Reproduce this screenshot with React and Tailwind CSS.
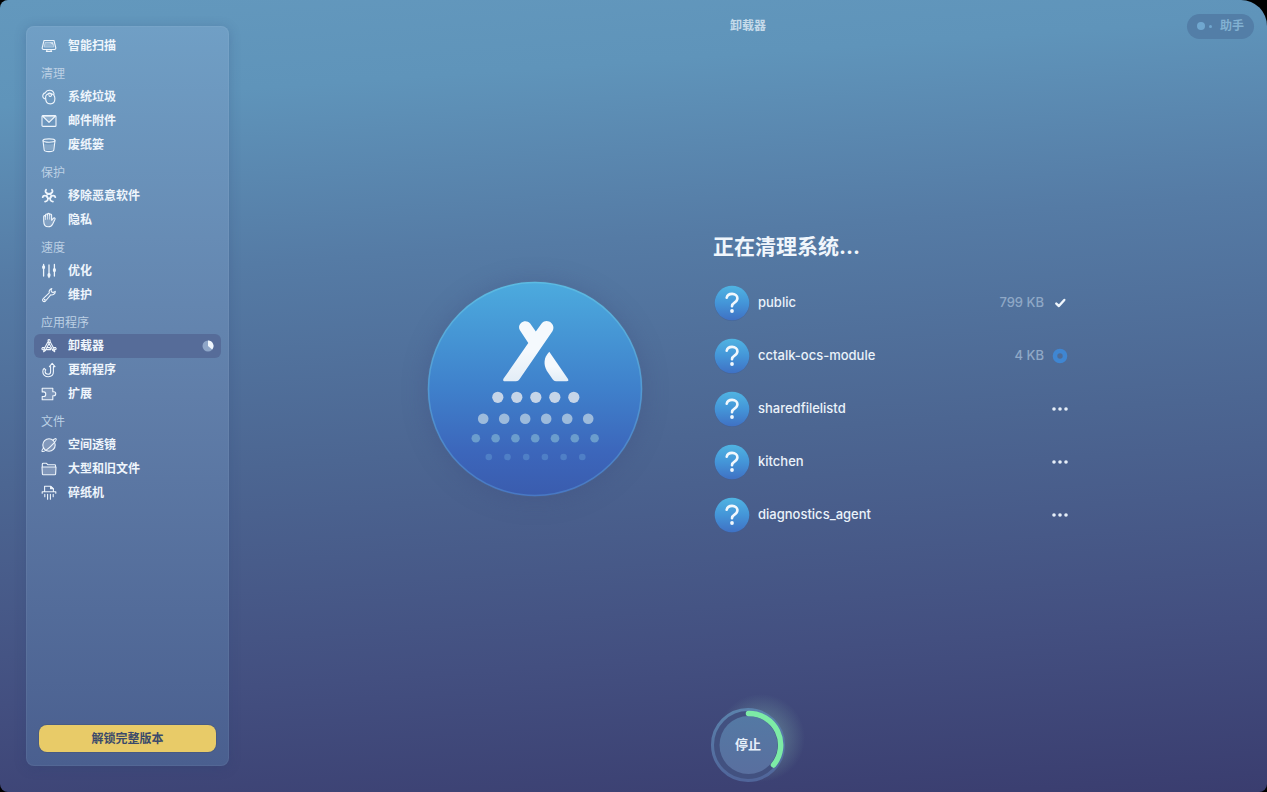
import React, { useState } from 'react';

const line = {
  fill: 'none',
  stroke: 'currentColor',
  strokeWidth: 1.1,
  strokeLinecap: 'round',
  strokeLinejoin: 'round',
};

const Icon = ({ children }) => (
  <svg viewBox="0 0 16 16" className="h-4 w-4 shrink-0" aria-hidden="true" {...line}>
    {children}
  </svg>
);

const icons = {
  scan: (
    <Icon>
      <path d="M3 2.5h10l1.8 7.3a1.4 1.4 0 0 1-1.3 1.7H2.5a1.4 1.4 0 0 1-1.3-1.7z" />
      <path d="M3.2 8.6 4.2 4.4h7.6l1 4.2z" fill="currentColor" fillOpacity="0.3" strokeWidth="0.5" />
      <path d="M8.5 4.4h3.3l.6 2.6z" fill="currentColor" fillOpacity="0.7" stroke="none" />
      <path d="M6.2 11.6 5.4 13.4h5.2l-.8-1.8" />
    </Icon>
  ),
  junk: (
    <Icon>
      <path d="M4.6 8.400c0-2.600 1.600-3.700 4.400-3.700 3 0 4.900 1.800 4.900 4.900 0 3.400-1.400 5.300-4.600 5.300-3.300 0-4.700-2.200-4.700-6.500z" />
      <path d="M4.600 10C2.200 9.800 1.200 7.800 2 5.800c.5-1.300 1.500-1.900 2.300-1.900C5 2.100 6.600 1.200 8.600 1.200c2.300 0 4.100 1.400 4.500 4" />
      <path d="M7 5.200c.2-1.600 3.600-1.500 3.600.7 0 1.700-2.200 2-2.600.7" />
    </Icon>
  ),
  mail: (
    <Icon>
      <rect x="1" y="2.600" width="14" height="10.800" rx="1" />
      <path d="M1.500 3 8 9.400 14.500 3z" fill="currentColor" fillOpacity="0.25" />
    </Icon>
  ),
  trash: (
    <Icon>
      <path d="M2 3.800 3.200 13c.1 1 2.300 1.600 4.800 1.600s4.700-.6 4.800-1.600L14 3.800" />
      <ellipse cx="8" cy="3.600" rx="6" ry="1.700" />
      <path d="M3 6.800c2.500 1 7.500 1 10 0l-.7 5.600c-2.200.9-6.400.9-8.600 0z" fill="currentColor" fillOpacity="0.2" stroke="none" />
    </Icon>
  ),
  malware: (
    <Icon>
      <circle cx="8" cy="8.200" r="2.300" strokeWidth="1.200" />
      <path
        d="M5 1.800C3.800 3.200 4.500 5.600 8 6c3.500-.4 4.200-2.800 3-4.200M1.700 9.200c.4-1.800 3.600-2.200 5 .2.800 1.900-.2 4-2.600 4.300M14.300 9.200c-.4-1.800-3.600-2.200-5 .2-.8 1.900.2 4 2.600 4.300"
        strokeWidth="1.800"
      />
    </Icon>
  ),
  privacy: (
    <Icon>
      <path
        d="M2.700 9V4.600c0-1.300 1.800-1.300 1.800 0V3c0-1.400 2-1.400 2 0v-.6c0-1.400 2.100-1.400 2.100 0V3c0-1.300 2-1.300 2 0v5.300l1.700-2c.9-.9 2.200-.1 1.700 1l-2.300 4.600c-1 2-2.500 2.900-4.500 2.900-3 0-4.500-2-4.500-5.800z"
        fill="currentColor"
        fillOpacity="0.2"
      />
      <path d="M4.500 4.500v3M6.500 3v4.200M8.600 3v4.200" strokeWidth="0.700" />
    </Icon>
  ),
  speed: (
    <Icon>
      <path d="M2.600 1.500v11.500M8 2v12.500M13.400 1.500v11.500" strokeWidth="1.300" />
      <path d="M2.600 3.800v.8M8 11.600v.8M13.400 6.600v.8" strokeWidth="3" />
    </Icon>
  ),
  wrench: (
    <Icon>
      <path d="M10.800 1.600c-2 .5-3.200 2.400-2.500 4.300L2.200 11.600c-1.800 1.900.5 4.200 2.300 2.400l5.200-6.200c2.200.6 4.500-.8 4.600-3.400l-2.300 1.200-1.600-.9-.3-1.700z" />
      <circle cx="3.700" cy="12.600" r="0.400" />
    </Icon>
  ),
  uninstall: (
    <Icon>
      <path d="M7 2.200c.6-.8 1.400-.8 2 0l.3 1.900 4 7.300-1.500.9-4-7.200zM8.700 4.200l-4.300 8.100-1.600-.9 4.200-7.600" />
      <path d="M1.600 9.600h2M12.400 9.600h2M1.500 9.600c-1 .7-.7 2.100.4 2.100h.8M14.500 9.600c1 .7.7 2.100-.4 2.100M3 11.800l-.4 2 1.800-1.300M13.200 11.600l.5 2.100-1.900-1.300M6.300 9.600h2.500l1 2H5.300" />
    </Icon>
  ),
  update: (
    <Icon>
      <path d="M8.400 4.600 11.200 1.300 14 4.600h-1.600v5.200c0 3-2 4.900-5 4.900-3.300 0-5.600-2-5.600-5 0-1.400.4-2.500 1.300-3.300l1.700 1.500c-.5.500-.7 1-.7 1.700 0 1.700 1.300 2.700 3 2.700 1.600 0 2.500-1 2.500-2.600V4.600z" />
    </Icon>
  ),
  extension: (
    <Icon>
      <path
        d="M1.200 2.200h10.600v3.600h1c2.600 0 2.600 4 0 4h-1v4H1.200v-3.300h1.600c2.600 0 2.600-4.600 0-4.600H1.200z"
        fill="currentColor"
        fillOpacity="0.200"
      />
    </Icon>
  ),
  lens: (
    <Icon>
      <circle cx="8" cy="8" r="6.200" fill="currentColor" fillOpacity="0.250" />
      <path d="M12 3c1.700-1.300 2.800-1.700 3.100-1.200.7 1-2 4.400-5.700 7.800C5.800 12.900 2 15.200 1.100 14.300c-.5-.5.100-1.700 1.500-3.400" />
    </Icon>
  ),
  folder: (
    <Icon>
      <path d="M1.300 5.600V3.200c0-.6.300-.9.900-.9h3.300l1.300 1.400h6.800c.6 0 .9.300.9.900v1" />
      <path d="M1 6h14l-.4 6.900c0 .5-.4.900-.9.900H2.300c-.5 0-.9-.4-.9-.9z" fill="currentColor" fillOpacity="0.250" />
    </Icon>
  ),
  shredder: (
    <Icon>
      <path d="M3.600 6.400V1.300h6.200l2.600 2.300v2.800" />
      <path d="M9.600 1.500v2.300h2.500z" fill="currentColor" />
      <path d="M1.200 8.200V6.700h13.600v1.500" />
      <path d="M3.800 9.300v2.500M6.600 9.300v5M9.400 9.300v5M12.200 9.300v2.500" />
    </Icon>
  ),
};

const sections = [
  { title: '', items: [{ id: 'scan', label: '智能扫描' }] },
  {
    title: '清理',
    items: [
      { id: 'junk', label: '系统垃圾' },
      { id: 'mail', label: '邮件附件' },
      { id: 'trash', label: '废纸篓' },
    ],
  },
  {
    title: '保护',
    items: [
      { id: 'malware', label: '移除恶意软件' },
      { id: 'privacy', label: '隐私' },
    ],
  },
  {
    title: '速度',
    items: [
      { id: 'speed', label: '优化' },
      { id: 'wrench', label: '维护' },
    ],
  },
  {
    title: '应用程序',
    items: [
      { id: 'uninstall', label: '卸载器' },
      { id: 'update', label: '更新程序' },
      { id: 'extension', label: '扩展' },
    ],
  },
  {
    title: '文件',
    items: [
      { id: 'lens', label: '空间透镜' },
      { id: 'folder', label: '大型和旧文件' },
      { id: 'shredder', label: '碎纸机' },
    ],
  },
];

const apps = [
  { name: 'public', size: '799 KB', status: 'done' },
  { name: 'cctalk-ocs-module', size: '4 KB', status: 'running' },
  { name: 'sharedfilelistd', status: 'waiting' },
  { name: 'kitchen', status: 'waiting' },
  { name: 'diagnostics_agent', status: 'waiting' },
];

// rows of falling particles under the logo
const dotRows = [
  { y: 116.3, x: 70.8, step: 19, count: 5, r: 5.6, fill: '#c6d5e8' },
  { y: 137.7, x: 56.2, step: 21, count: 6, r: 5.3, fill: '#9dbbdc' },
  { y: 157.3, x: 48.8, step: 19.8, count: 7, r: 4.3, fill: '#6b9dcd' },
  { y: 176, x: 61.8, step: 18.7, count: 6, r: 3.3, fill: '#4f7fc6' },
];

const Sidebar = ({ active, onSelect }) => (
  <aside className="flex w-[203px] shrink-0 flex-col rounded-lg border border-white/5 bg-linear-to-b from-[#709fc5] via-[#607ea9] to-[#4a5f8f] bg-origin-border px-[7px] pt-[7px] pb-[13px] shadow-[0_2px_12px_rgba(40,60,110,0.25)]">
    <nav>
      {sections.map((section) => (
        <div key={section.title}>
          {section.title && (
            <h2 className="pt-2 pb-[3px] pl-[7px] text-xs leading-4 text-[#bcd0e4]">{section.title}</h2>
          )}
          <ul>
            {section.items.map((item) => (
              <li key={item.id}>
                <button
                  type="button"
                  onClick={() => onSelect(item.id)}
                  className={`flex h-6 w-full items-center gap-[11px] rounded-md px-[7px] text-xs font-semibold text-[#eef5fc] ${
                    active === item.id ? 'bg-[#566c99]' : ''
                  }`}
                >
                  {icons[item.id]}
                  <span className="flex-1 text-left">{item.label}</span>
                  {item.id === 'uninstall' && (
                    <svg viewBox="0 0 12 12" className="h-3 w-3" aria-hidden="true">
                      <circle cx="6" cy="6" r="5.500" fill="#8ea6c8" />
                      <path d="M6 6V.5a5.500 5.500 0 0 1 4.200 9z" fill="#eef5fc" />
                    </svg>
                  )}
                </button>
              </li>
            ))}
          </ul>
        </div>
      ))}
    </nav>
    <button
      type="button"
      className="mx-[5px] mt-auto h-[27px] rounded-lg bg-[#e8cb68] text-xs font-semibold text-[#3b4a6b] shadow-[0_0_0_1px_rgba(60,70,90,0.25)]"
    >
      解锁完整版本
    </button>
  </aside>
);

const Logo = () => (
  <svg
    viewBox="0 0 216 216"
    className="h-[216px] w-[216px] shrink-0 rounded-full shadow-[0_2px_24px_rgba(60,75,125,0.35)]"
    aria-hidden="true"
  >
    <defs>
      <linearGradient id="disc" x1="0" y1="0" x2="0" y2="1">
        <stop offset="0" stopColor="#4cabde" />
        <stop offset="0.500" stopColor="#3f80cb" />
        <stop offset="0.800" stopColor="#3c66bb" />
        <stop offset="1" stopColor="#3a5cae" />
      </linearGradient>
      <linearGradient id="rim" x1="0" y1="0" x2="0" y2="1">
        <stop offset="0" stopColor="#5cbbe2" />
        <stop offset="1" stopColor="#4878c4" />
      </linearGradient>
      <linearGradient id="mark" x1="0" y1="0" x2="0" y2="1">
        <stop offset="0.500" stopColor="#f5f9fd" />
        <stop offset="1" stopColor="#e3edf6" />
      </linearGradient>
    </defs>
    <circle cx="108" cy="108" r="106.500" fill="url(#disc)" stroke="url(#rim)" strokeWidth="1.500" />
    <path
      d="M114.800 42.300 108.800 50.500 103.200 42.600C98.600 36.700 89.200 42.600 92.900 49.300L101.300 62 76.600 97.600C75.600 99.300 76.300 100.200 77.800 100.200H89C90.600 100.200 91.700 99.500 92.500 98.300L125.600 50C129.300 42.600 119.600 36.400 114.800 42.300Z"
      fill="url(#mark)"
    />
    <path
      d="M122.300 70.800C116.600 76.500 116.300 83.500 119.800 89.700L125.600 98.300C126.500 99.600 127.500 100.200 129 100.200H139.800C141.300 100.200 141.800 99.200 141 97.900Z"
      fill="url(#mark)"
    />
    {dotRows.map((row) =>
      Array.from({ length: row.count }, (_, i) => (
        <circle key={`${row.y}-${i}`} cx={row.x + i * row.step} cy={row.y} r={row.r} fill={row.fill} />
      ))
    )}
  </svg>
);

const StatusIcon = ({ status }) => (
  <svg viewBox="0 0 16 16" className="h-4 w-4" aria-hidden="true">
    {status === 'done' && (
      <path d="M4.300 8.600 6.900 11l5.400-6" fill="none" stroke="#f0f6fc" strokeWidth="2.400" strokeLinejoin="round" strokeLinecap="round" />
    )}
    {status === 'running' && <circle cx="8" cy="8" r="5" fill="none" stroke="#3f86d2" strokeWidth="4.600" />}
    {status === 'waiting' && (
      <g fill="#e6eef8">
        <circle cx="2" cy="8" r="1.800" />
        <circle cx="8" cy="8" r="1.800" />
        <circle cx="14" cy="8" r="1.800" />
      </g>
    )}
  </svg>
);

const AppRow = ({ app }) => (
  <li className="flex h-[53px] items-center gap-2 px-px">
    <svg viewBox="0 0 36 36" className="h-9 w-9 shrink-0" aria-hidden="true">
      <defs>
        <linearGradient id="badge" x1="0" y1="0" x2="0" y2="1">
          <stop offset="0" stopColor="#50b4e2" />
          <stop offset="0.500" stopColor="#4495d8" />
          <stop offset="1" stopColor="#3f71c4" />
        </linearGradient>
      </defs>
      <circle cx="18" cy="18.500" r="17.500" fill="#3f5f95" fillOpacity="0.500" />
      <circle cx="18" cy="18" r="17.300" fill="url(#badge)" />
      <path
        d="M12.700 12.800c.5-2.500 2.600-3.900 5.400-3.900 3.200 0 5.300 1.800 5.300 4.400 0 2.100-1.100 3.200-2.900 4.300-1.700 1-2.500 1.900-2.500 3.700"
        fill="none"
        stroke="#f2f8fd"
        strokeWidth="2.600"
        strokeLinecap="round"
      />
      <circle cx="18" cy="26" r="1.900" fill="#f2f8fd" />
    </svg>
    <span className="flex-1 text-[13px] font-medium text-[#eaf2fa]">{app.name}</span>
    {app.size && <span className="text-[13px] font-medium text-[#8fa8c6]">{app.size}</span>}
    <StatusIcon status={app.status} />
  </li>
);

const StopButton = () => (
  <button type="button" className="grid h-[74px] w-[74px] place-items-center rounded-full text-[13px] font-semibold text-[#e6effa]">
    <svg viewBox="0 0 74 74" className="col-start-1 row-start-1 h-[74px] w-[74px] overflow-visible" aria-hidden="true">
      <defs>
        <radialGradient id="glow">
          <stop offset="0.300" stopColor="#7fb0ac" stopOpacity="0.450" />
          <stop offset="1" stopColor="#7fb0ac" stopOpacity="0" />
        </radialGradient>
        <linearGradient id="ring" x1="0" y1="0" x2="0" y2="1">
          <stop offset="0" stopColor="#5b82ac" />
          <stop offset="1" stopColor="#50659a" />
        </linearGradient>
        <linearGradient id="face" x1="0" y1="0" x2="0" y2="1">
          <stop offset="0" stopColor="#5479a4" />
          <stop offset="1" stopColor="#596f9f" />
        </linearGradient>
      </defs>
      <circle cx="50" cy="30" r="44" fill="url(#glow)" />
      <circle cx="37" cy="37" r="35.500" fill="#425180" stroke="url(#ring)" strokeWidth="3" />
      <circle cx="37.500" cy="37" r="29" fill="url(#face)" />
      <path d="M37.500 5.500A31.500 31.500 0 0 1 62.500 57" fill="none" stroke="#7deba6" strokeWidth="5.500" strokeLinecap="round" />
    </svg>
    <span className="relative col-start-1 row-start-1">停止</span>
  </button>
);

const App = () => {
  const [active, setActive] = useState('uninstall');

  return (
    <div className="min-h-screen bg-black font-['Inter','Noto_Sans_CJK_SC',sans-serif]">
      <div className="flex min-h-screen rounded-lg rounded-tr-[26px] bg-[linear-gradient(176deg,#6398bd_0%,#5f94ba_12%,#557ba5_32%,#4c6692_55%,#434f80_80%,#3a3d6f_100%)]">
        <div className="flex py-[26px] pl-[26px]">
          <Sidebar active={active} onSelect={setActive} />
        </div>

        <main className="flex flex-1 flex-col">
          <header className="grid h-[52px] grid-cols-[1fr_auto_1fr] items-center px-[13px]">
            <h1 className="col-start-2 text-xs font-semibold text-[#c6dbea]">卸载器</h1>
            <button
              type="button"
              className="flex h-[25px] items-center gap-1 justify-self-end rounded-full bg-[#537ea7] px-2.5 text-xs font-semibold text-[#82b1d2]"
            >
              <span className="h-2 w-2 rounded-full bg-[#70a7cf]" />
              <span className="mr-1 h-[3px] w-[3px] rounded-full bg-[#70a7cf]" />
              助手
            </button>
          </header>

          <div className="flex flex-1 items-center justify-center gap-[70px] pt-[18px]">
            <Logo />
            <section className="w-[356px]">
              <h2 className="mb-5 text-[21px] leading-5 font-bold text-[#f0f6fc]">正在清理系统...</h2>
              <ul>
                {apps.map((app) => (
                  <AppRow key={app.name} app={app} />
                ))}
              </ul>
            </section>
          </div>

          <footer className="flex justify-center pb-2.5">
            <StopButton />
          </footer>
        </main>
      </div>
    </div>
  );
};

export default App;
